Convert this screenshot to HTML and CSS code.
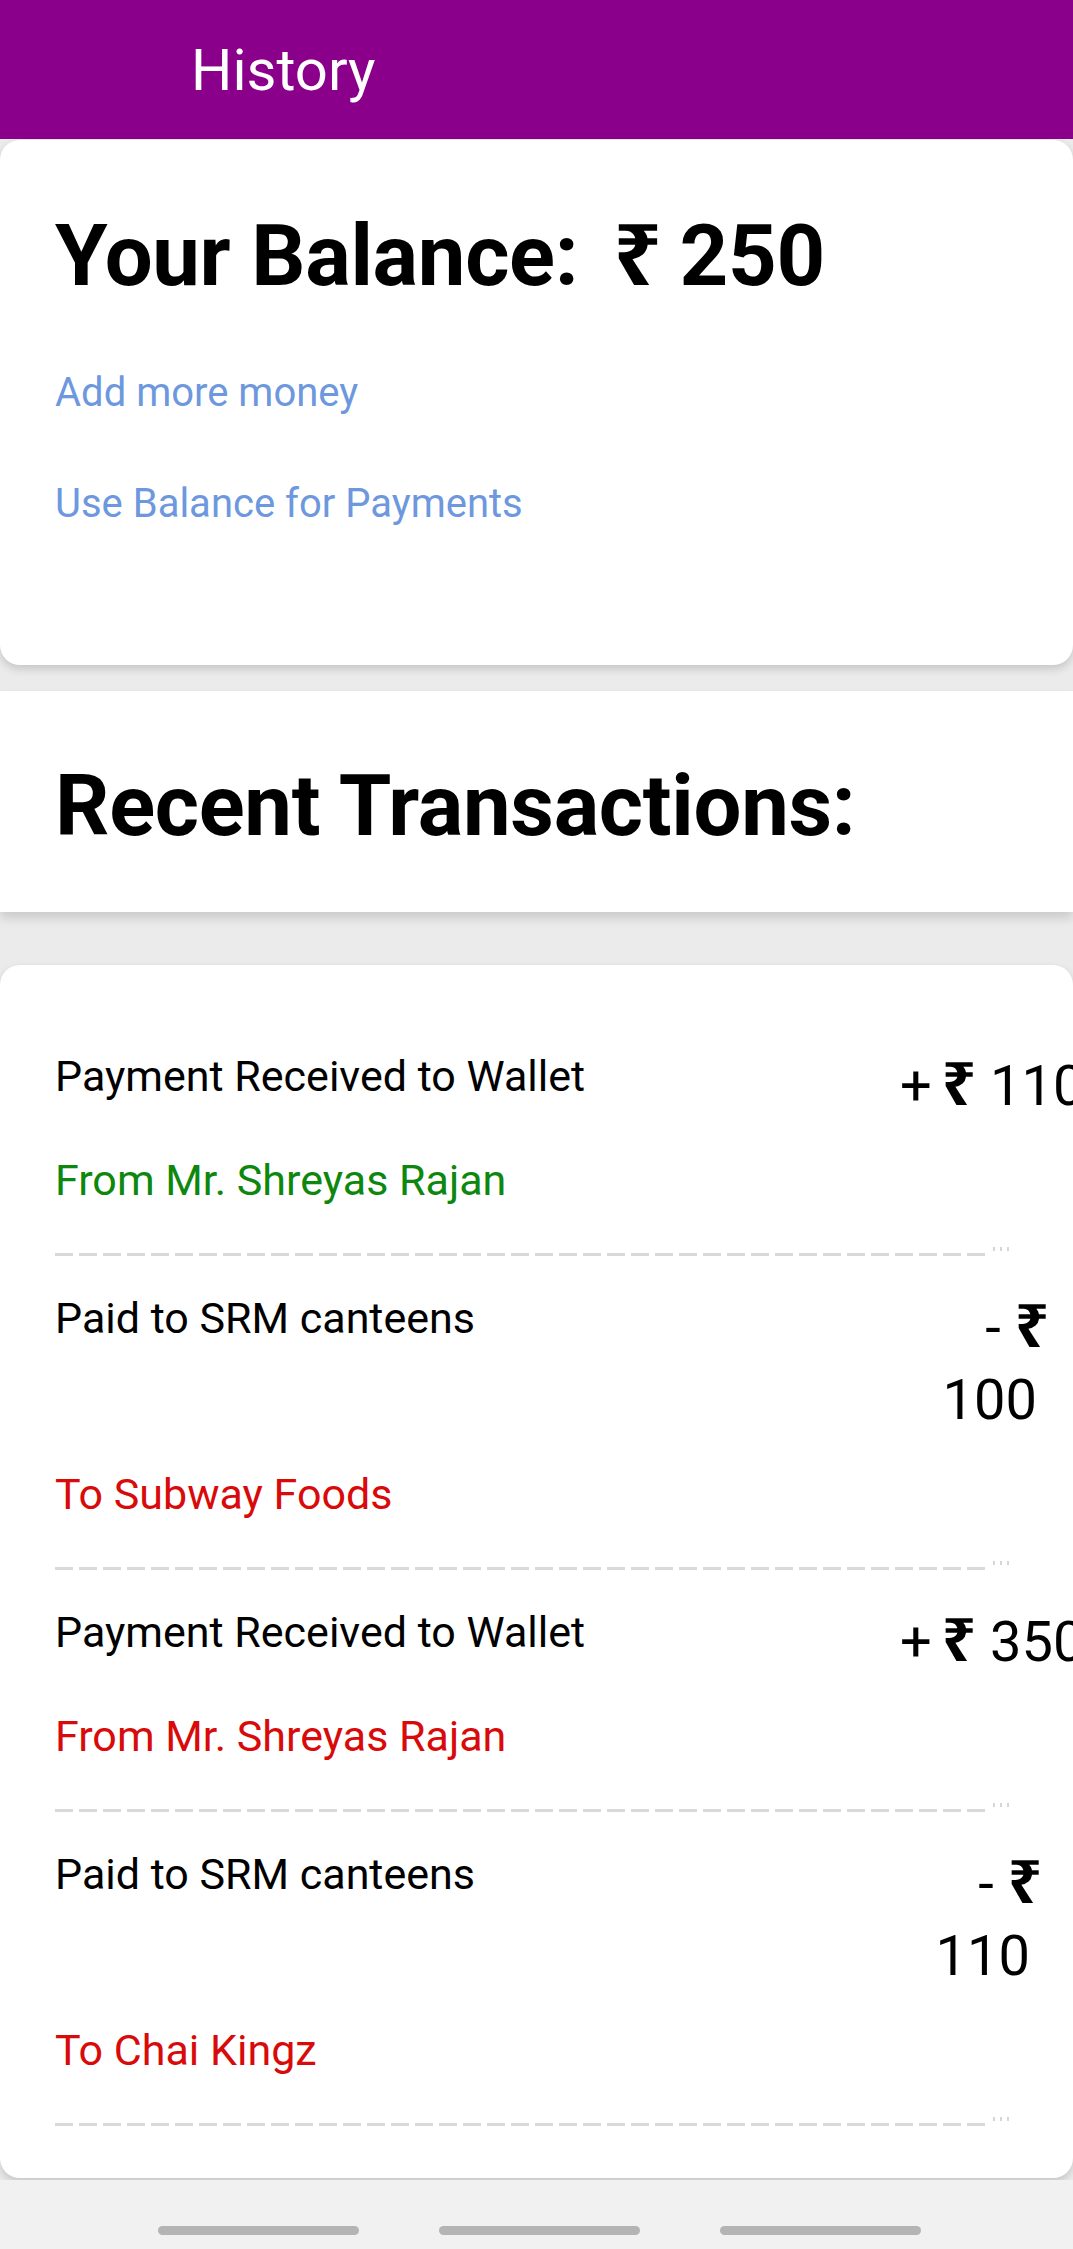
FILE: index.html
```html
<!DOCTYPE html>
<html lang="en">
<head>
<meta charset="utf-8">
<title>History</title>
<link rel="stylesheet" href="styles.css">
</head>
<body>
<div class="screen">
  <header class="appbar">
    <h1 class="appbar-title">History</h1>
  </header>

  <section class="card balance-card">
    <h2 class="big-title">Your Balance: <span class="rupee">₹</span>250</h2>
    <a class="link first-link" href="#">Add more money</a>
    <a class="link" href="#">Use Balance for Payments</a>
  </section>

  <section class="recent">
    <h2 class="big-title">Recent Transactions:</h2>
  </section>

  <section class="card tx-card">
    <div class="tx">
      <div class="tx-top">
        <div class="tx-title">Payment Received to Wallet</div>
        <div class="tx-amount single">+<span class="rupee">₹</span>110</div>
      </div>
      <div class="tx-sub green">From Mr. Shreyas Rajan</div>
      <div class="tx-sep"><span class="dash"></span><span class="dots"><i></i><i></i><i></i></span></div>
    </div>

    <div class="tx">
      <div class="tx-top">
        <div class="tx-title">Paid to SRM canteens</div>
        <div class="tx-amount multi r2">
          <span class="l1">-<span class="rupee">₹</span></span>
          <span class="l2">100</span>
        </div>
      </div>
      <div class="tx-sub red">To Subway Foods</div>
      <div class="tx-sep"><span class="dash"></span><span class="dots"><i></i><i></i><i></i></span></div>
    </div>

    <div class="tx">
      <div class="tx-top">
        <div class="tx-title">Payment Received to Wallet</div>
        <div class="tx-amount single">+<span class="rupee">₹</span>350</div>
      </div>
      <div class="tx-sub red">From Mr. Shreyas Rajan</div>
      <div class="tx-sep"><span class="dash"></span><span class="dots"><i></i><i></i><i></i></span></div>
    </div>

    <div class="tx">
      <div class="tx-top">
        <div class="tx-title">Paid to SRM canteens</div>
        <div class="tx-amount multi r4">
          <span class="l1">-<span class="rupee">₹</span></span>
          <span class="l2">110</span>
        </div>
      </div>
      <div class="tx-sub red">To Chai Kingz</div>
      <div class="tx-sep"><span class="dash"></span><span class="dots"><i></i><i></i><i></i></span></div>
    </div>
  </section>

  <nav class="navbar">
    <span class="pill"></span>
    <span class="pill"></span>
    <span class="pill"></span>
  </nav>
</div>
</body>
</html>
```

FILE: styles.css
```css
* { box-sizing: border-box; }

html, body {
  margin: 0;
  padding: 0;
}

body {
  background: #ebebeb;
  font-family: Roboto, "Noto Sans", "DejaVu Sans", sans-serif;
  color: #000;
  width: 1073px;
  overflow-x: hidden;
}

.screen {
  display: flex;
  flex-direction: column;
  min-height: 2249px;
}

.appbar {
  height: 139px;
  background: #8b008b;
  display: flex;
  align-items: center;
  padding-left: 191px;
}

.appbar-title {
  margin: 0;
  color: #fff;
  font-weight: 400;
  font-size: 58px;
  line-height: 70px;
}

.card {
  background: #fff;
  border-radius: 20px;
  box-shadow: 0 4px 8px rgba(0, 0, 0, 0.16);
}

.balance-card {
  margin-top: 1px;
  height: 525px;
  padding: 62px 55px 0 55px;
  display: flex;
  flex-direction: column;
  align-items: flex-start;
}

.big-title {
  margin: 0;
  font-weight: 700;
  font-size: 85px;
  line-height: 100px;
  white-space: nowrap;
  letter-spacing: -0.3px;
}

.big-title .rupee {
  font-family: "Noto Sans", "DejaVu Sans", sans-serif;
  font-weight: 700;
  margin: 0 18px 0 14px;
}

.link {
  display: block;
  color: #6d98dd;
  text-decoration: none;
  font-size: 40px;
  line-height: 48px;
  margin-top: 63px;
}

.recent {
  margin-top: 26px;
  background: #fff;
  height: 221px;
  padding: 65px 55px 0 55px;
  box-shadow: 0 6px 10px rgba(0, 0, 0, 0.14);
}

.tx-card {
  margin-top: 53px;
  padding: 49px 0 52px 0;
  overflow: hidden;
}

.tx {
  padding: 32px 0 0 55px;
}

.tx-top {
  display: flex;
  align-items: flex-start;
  justify-content: space-between;
}

.tx-title {
  font-size: 43px;
  line-height: 56px;
  margin-top: 2px;
  white-space: nowrap;
}

.tx-amount {
  font-size: 56px;
  line-height: 72px;
  white-space: nowrap;
}

.tx-amount .rupee {
  font-family: "Noto Sans", "DejaVu Sans", sans-serif;
  font-weight: 700;
  font-size: 60px;
  margin: 0 14px 0 10px;
}

.tx-amount.single {
  width: 173px;
  flex: none;
}

.tx-amount.multi {
  display: flex;
  flex-direction: column;
  align-items: flex-end;
}

.tx-amount.multi .l2 {
  padding-right: 12px;
}

.tx-amount.multi .rupee {
  margin: 0 0 0 14px;
}

.tx-amount.r2 { margin-right: 24px; }
.tx-amount.r4 { margin-right: 31px; }

.tx-sub {
  font-size: 43px;
  line-height: 56px;
  margin-top: 30px;
}

.green { color: #0d870d; }
.red { color: #d80a0a; }

.tx-sep {
  display: flex;
  align-items: flex-start;
  margin-top: 45px;
}

.dash {
  display: block;
  width: 931px;
  height: 3px;
  background: repeating-linear-gradient(to right, #d9d9d9 0, #d9d9d9 18px, transparent 18px, transparent 24px);
}

.dots {
  display: flex;
  gap: 5px;
  margin: -6px 0 0 7px;
}

.dots i {
  display: block;
  width: 2px;
  height: 4px;
  background: #d6d6d6;
}

.navbar {
  margin-top: auto;
  height: 69px;
  background: #f1f1f1;
  display: flex;
  justify-content: flex-start;
  align-items: flex-start;
  gap: 80px;
  padding: 46px 0 0 158px;
}

.pill {
  display: block;
  width: 201px;
  height: 9px;
  border-radius: 5px;
  background: #b4b4b4;
}
```
